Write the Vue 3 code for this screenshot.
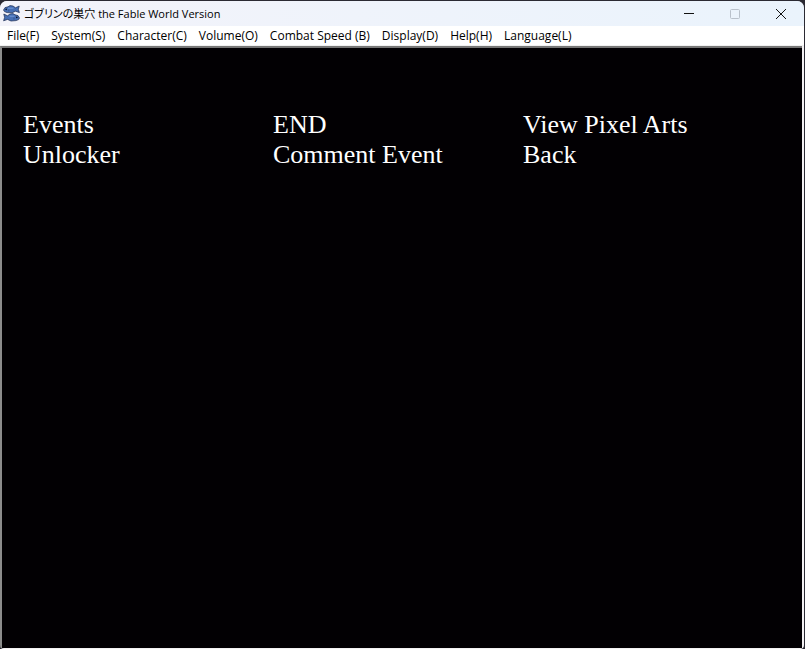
<script setup>
const menus = [
  'File(F)',
  'System(S)',
  'Character(C)',
  'Volume(O)',
  'Combat Speed (B)',
  'Display(D)',
  'Help(H)',
  'Language(L)',
]
const choices = ['Events', 'END', 'View Pixel Arts', 'Unlocker', 'Comment Event', 'Back']
</script>

<template>
  <div class="desktop">
    <div class="window">
      <header class="titlebar">
        <svg class="app-icon" viewBox="0 0 17 17" aria-hidden="true">
          <g fill="#466fb4" stroke="#1c2b50" stroke-width="0.7" stroke-linejoin="round">
            <path d="M0.5 5 L2 2.6 L5 1.8 L7 0.6 L10 1 L12.5 2.8 L16.2 1 L15.4 4.4 L16.4 7.6 L12.5 6.2 L9 7.8 L4 7.6 L1.5 6.6 Z" />
            <path d="M16.5 13 L15 10.6 L12 9.8 L10 8.6 L7 9 L4.5 10.8 L0.8 9 L1.6 12.4 L0.6 15.8 L4.5 14.4 L8 16 L13 15.6 L15.6 14.6 Z" />
          </g>
          <path fill="none" stroke="#7297d6" stroke-width="1" d="M5 3.2 L10.5 3.2 M6.5 11.2 L11.5 11.2" />
          <path fill="none" stroke="#2b4985" stroke-width="0.8" d="M5.8 4.5 L5.8 6.5 M11 12.5 L11 14.5" />
          <circle cx="3.2" cy="4.4" r="0.8" fill="#0b142b" />
          <circle cx="13.8" cy="12.4" r="0.8" fill="#0b142b" />
        </svg>
        <h1 class="title">ゴブリンの巣穴 the Fable World Version</h1>
        <div class="controls">
          <button class="control" aria-label="Minimize">
            <svg viewBox="0 0 12 12"><path d="M1 5.5H11" /></svg>
          </button>
          <button class="control" aria-label="Maximize" disabled>
            <svg viewBox="0 0 12 12"><rect x="1.5" y="1.5" width="9" height="9" rx="1" /></svg>
          </button>
          <button class="control" aria-label="Close">
            <svg viewBox="0 0 12 12"><path d="M1 1L11 11M11 1L1 11" /></svg>
          </button>
        </div>
      </header>
      <nav class="menubar">
        <button v-for="menu in menus" :key="menu" class="menu">{{ menu }}</button>
      </nav>
      <main class="screen">
        <div class="choices">
          <button v-for="choice in choices" :key="choice" class="choice">{{ choice }}</button>
        </div>
      </main>
    </div>
  </div>
</template>

<style>
body {
  background: #2b2a33;
}
</style>

<style scoped>
.desktop {
  box-sizing: border-box;
  display: flex;
  min-height: 100vh;
  padding: 1px 1px 0 0;
  background: #2b2a33;
}
.window {
  flex: 1;
  display: flex;
  flex-direction: column;
  overflow: hidden;
  border-radius: 7px 7px 4px 4px;
  background: #f3f1f3;
  font-family: "Open Sans", "Noto Sans CJK JP", sans-serif;
  font-size: 12px;
  color: #000;
}
button {
  margin: 0;
  padding: 0;
  border: 0;
  background: none;
  font: inherit;
  color: inherit;
}
.titlebar {
  display: flex;
  align-items: center;
  height: 25px;
  padding-left: 3px;
  background: linear-gradient(90deg, #f3f3fa, #eaf3fc);
}
.app-icon {
  width: 17px;
  height: 17px;
}
.title {
  flex: 1;
  margin: 0 0 0 4px;
  font-size: 11px;
  font-weight: 400;
  line-height: 24px;
  font-feature-settings: "palt";
  white-space: nowrap;
}
.controls {
  display: flex;
}
.control {
  display: flex;
  align-items: center;
  justify-content: center;
  width: 46px;
  height: 24px;
}
.control svg {
  width: 12px;
  height: 12px;
  fill: none;
  stroke: #111;
}
.control:disabled svg {
  stroke: #b9c1cb;
}
.menubar {
  display: flex;
  gap: 12px;
  padding: 0 7px;
  border-bottom: 1px solid #f0f0f0;
  background: #fff;
}
.menu {
  line-height: 19px;
  white-space: nowrap;
}
.screen {
  flex: 1;
  margin: 0 2px 1px 0;
  border-top: 2px solid #777;
  border-left: 2px solid #8c8c8c;
  background: #020003;
}
.choices {
  display: grid;
  grid-template-columns: repeat(3, 1fr);
  padding: 62px 29px 0 21px;
}
.choice {
  font-family: "Liberation Serif", serif;
  font-size: 26px;
  line-height: 30px;
  text-align: left;
  white-space: nowrap;
  color: #fff;
}
</style>
